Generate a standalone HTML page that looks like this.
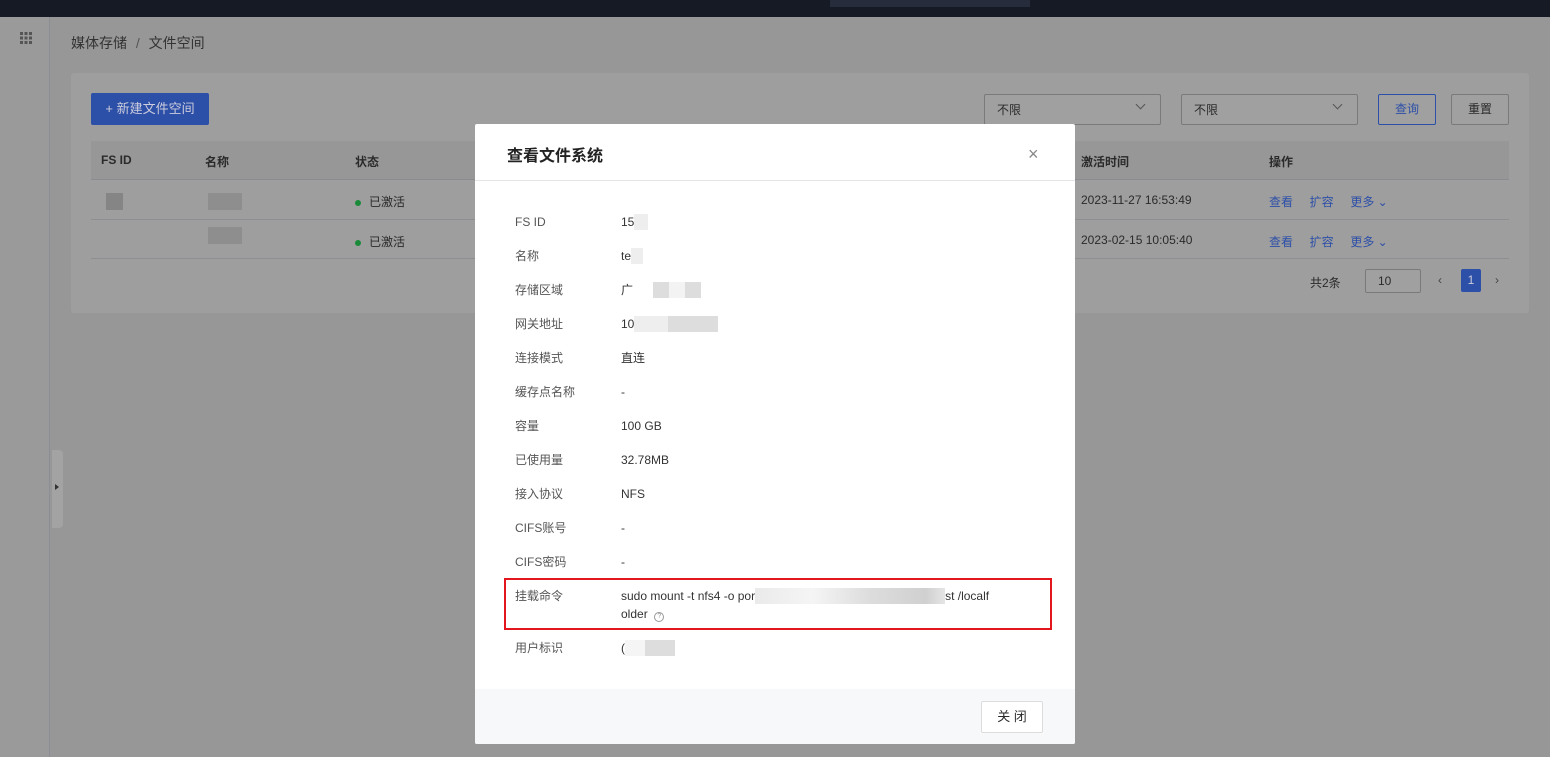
<!DOCTYPE html>
<html><head><meta charset="utf-8"><style>
*{box-sizing:border-box;margin:0;padding:0}
body{width:1550px;height:757px;overflow:hidden;background:#979797;font-family:"Liberation Sans","Noto Sans CJK SC",sans-serif;font-size:12px;color:#2a2a2a;position:relative}
.a{position:absolute}
.top{left:0;top:0;width:1550px;height:17px;background:#161a25}
.side{left:0;top:17px;width:50px;height:740px;background:#9a9a9a;border-right:1px solid #8c8e95}
.card{left:71px;top:73px;width:1458px;height:240px;background:#9e9e9e;border-radius:3px}
.btn{border:1px solid #7a7a7a;border-radius:2px;background:#a0a0a0}
.modal{left:475px;top:124px;width:600px;height:620px;background:#fff;border-radius:2px;overflow:hidden}
.row{position:absolute;left:40px;font-size:12px;line-height:16px}
.row .l{position:absolute;left:0;top:0;color:#555;width:120px}
.row .v{position:absolute;left:106px;top:0;color:#333;white-space:nowrap}
.blur{display:inline-block;height:16px;vertical-align:top}
.chev{position:absolute;width:7px;height:7px;border-right:1px solid #555;border-bottom:1px solid #555;transform:rotate(45deg)}
</style></head><body>
<div class="a top"></div>
<div class="a" style="left:830px;top:0;width:200px;height:7px;background:#262c3b"></div>
<div class="a side"></div>
<div class="a" style="left:20px;top:32px;width:12px;height:12px;background:repeating-linear-gradient(90deg,#555 0 3px,transparent 3px 4.5px);-webkit-mask:repeating-linear-gradient(0deg,#000 0 3px,transparent 3px 4.5px)"></div>
<div class="a" style="left:52px;top:450px;width:11px;height:78px;background:#a3a3a3;border-radius:0 4px 4px 0"></div>
<div class="a" style="left:55px;top:484px;width:0;height:0;border-left:4px solid #333;border-top:3px solid transparent;border-bottom:3px solid transparent"></div>
<div class="a" style="left:71px;top:33px;font-size:14px;color:#333">媒体存储 <span style="color:#555;margin:0 5px">/</span> 文件空间</div>
<div class="a card"></div>
<div class="a" style="left:91px;top:93px;width:118px;height:32px;background:#2c4fa8;border-radius:2px;color:#ccd;font-size:13px;line-height:32px;text-align:center">+ 新建文件空间</div>
<div class="a btn" style="left:984px;top:94px;width:177px;height:31px;padding:8px 12px;font-size:12px;line-height:14px">不限</div>
<div class="chev" style="left:1137px;top:101px"></div>
<div class="a btn" style="left:1181px;top:94px;width:177px;height:31px;padding:8px 12px;font-size:12px;line-height:14px">不限</div>
<div class="chev" style="left:1334px;top:101px"></div>
<div class="a btn" style="left:1378px;top:94px;width:58px;height:31px;border-color:#2c4fa8;color:#2c4fa8;text-align:center;line-height:29px">查询</div>
<div class="a btn" style="left:1451px;top:94px;width:58px;height:31px;text-align:center;line-height:29px">重置</div>
<div class="a" style="left:91px;top:141px;width:1418px;height:39px;background:#979797;border-bottom:1px solid #8a8a90"></div>
<div class="a" style="left:101px;top:153px;font-weight:bold">FS ID</div>
<div class="a" style="left:205px;top:153px;font-weight:bold">名称</div>
<div class="a" style="left:355px;top:153px;font-weight:bold">状态</div>
<div class="a" style="left:1081px;top:153px;font-weight:bold">激活时间</div>
<div class="a" style="left:1269px;top:153px;font-weight:bold">操作</div>
<div class="a" style="left:91px;top:219px;width:1418px;height:1px;background:#8d8d92"></div>
<div class="a" style="left:91px;top:258px;width:1418px;height:1px;background:#8d8d92"></div>
<div class="a" style="left:355px;top:193px"><span style="display:inline-block;width:6px;height:6px;border-radius:3px;background:#1a8a3a;margin-right:8px;vertical-align:middle"></span>已激活</div>
<div class="a" style="left:355px;top:233px"><span style="display:inline-block;width:6px;height:6px;border-radius:3px;background:#1a8a3a;margin-right:8px;vertical-align:middle"></span>已激活</div>
<div class="a" style="left:106px;top:193px;width:17px;height:17px;background:#858585"></div>
<div class="a" style="left:208px;top:193px;width:34px;height:17px;background:#8e8e8e"></div>
<div class="a" style="left:208px;top:227px;width:34px;height:17px;background:#8e8e8e"></div>
<div class="a" style="left:1081px;top:193px">2023-11-27 16:53:49</div>
<div class="a" style="left:1081px;top:233px">2023-02-15 10:05:40</div>
<div class="a" style="left:1269px;top:193px;color:#2c4fa8">查看 &nbsp;&nbsp;&nbsp; 扩容 &nbsp;&nbsp;&nbsp; 更多 ⌄</div>
<div class="a" style="left:1269px;top:233px;color:#2c4fa8">查看 &nbsp;&nbsp;&nbsp; 扩容 &nbsp;&nbsp;&nbsp; 更多 ⌄</div>
<div class="a" style="left:1310px;top:274px">共2条</div>
<div class="a btn" style="left:1365px;top:269px;width:56px;height:24px;padding:4px 12px">10</div>
<div class="a" style="left:1438px;top:273px;color:#444">‹</div>
<div class="a" style="left:1461px;top:269px;width:20px;height:23px;background:#2c4fa8;color:#ccd;text-align:center;line-height:23px;border-radius:2px">1</div>
<div class="a" style="left:1495px;top:273px;color:#444">›</div>

<div class="a modal">
 <div class="a" style="left:32px;top:18px;font-size:16px;font-weight:bold;color:#222">查看文件系统</div>
 <div class="a" style="left:553px;top:20px;font-size:18px;color:#888">×</div>
 <div class="a" style="left:0;top:56px;width:600px;height:1px;background:#e5e5e5"></div>
 <div class="row" style="top:90px"><span class="l">FS ID</span><span class="v">15<span class="blur" style="width:14px;background:#eee"></span></span></div>
 <div class="row" style="top:124px"><span class="l">名称</span><span class="v">te<span class="blur" style="width:12px;background:#eee"></span></span></div>
 <div class="row" style="top:158px"><span class="l">存储区域</span><span class="v">广<span class="blur" style="width:20px"></span><span class="blur" style="width:16px;background:#ddd"></span><span class="blur" style="width:16px;background:#f3f3f3"></span><span class="blur" style="width:16px;background:#ddd"></span></span></div>
 <div class="row" style="top:192px"><span class="l">网关地址</span><span class="v">10<span class="blur" style="width:34px;background:#eee"></span><span class="blur" style="width:50px;background:#ddd"></span></span></div>
 <div class="row" style="top:226px"><span class="l">连接模式</span><span class="v">直连</span></div>
 <div class="row" style="top:260px"><span class="l">缓存点名称</span><span class="v">-</span></div>
 <div class="row" style="top:294px"><span class="l">容量</span><span class="v">100 GB</span></div>
 <div class="row" style="top:328px"><span class="l">已使用量</span><span class="v">32.78MB</span></div>
 <div class="row" style="top:362px"><span class="l">接入协议</span><span class="v">NFS</span></div>
 <div class="row" style="top:396px"><span class="l">CIFS账号</span><span class="v">-</span></div>
 <div class="row" style="top:430px"><span class="l">CIFS密码</span><span class="v">-</span></div>
 <div class="a" style="left:29px;top:454px;width:548px;height:52px;border:2px solid #e3161e"></div>
 <div class="row" style="top:464px"><span class="l">挂载命令</span><span class="v">sudo mount -t nfs4 -o por<span class="blur" style="width:190px;background:linear-gradient(90deg,#eaeaea,#f5f5f5 30%,#ddd 60%,#d0d0d0 90%,#e5e5e5)"></span>st /localf<br><span style="line-height:20px">older &nbsp;<span style="display:inline-block;width:10px;height:10px;border:1px solid #999;border-radius:50%;font-size:7px;line-height:8px;text-align:center;color:#999">?</span></span></span></div>
 <div class="row" style="top:516px"><span class="l">用户标识</span><span class="v">(<span class="blur" style="width:20px;background:#f5f5f5"></span><span class="blur" style="width:30px;background:#ddd"></span></span></div>
 <div class="a" style="left:0;top:565px;width:600px;height:55px;background:#f7f8fa"></div>
 <div class="a" style="left:506px;top:577px;width:62px;height:32px;border:1px solid #ddd;border-radius:2px;background:#fff;text-align:center;line-height:30px;font-size:13px">关 闭</div>
</div>
</body></html>
